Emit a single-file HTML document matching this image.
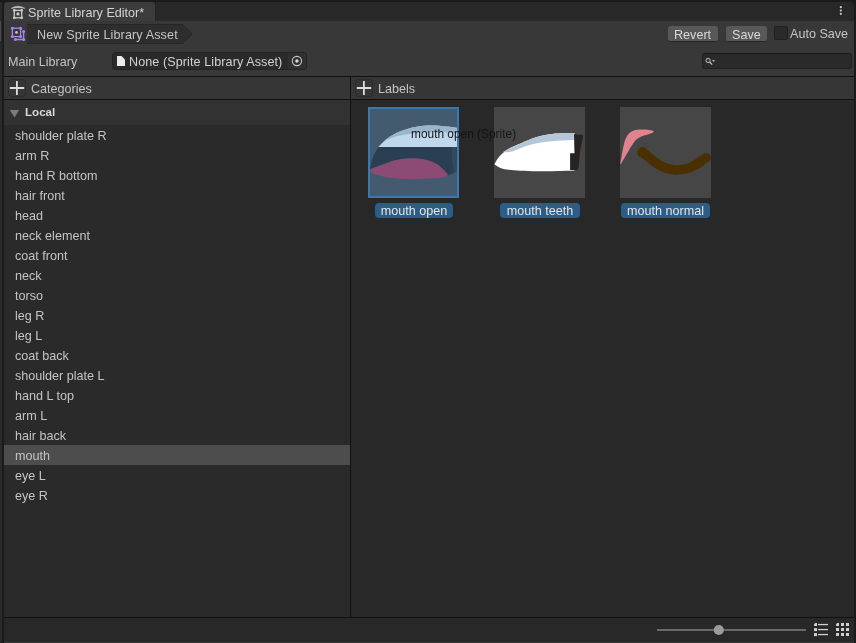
<!DOCTYPE html>
<html><head><meta charset="utf-8">
<style>
*{box-sizing:border-box;margin:0;padding:0}
html,body{width:856px;height:643px;overflow:hidden;background:#1b1b1b}
body{font-family:"Liberation Sans",sans-serif;font-size:12.6px;color:#c4c4c4;position:relative;-webkit-font-smoothing:antialiased}
.a{position:absolute}
.t{position:absolute;white-space:nowrap;line-height:16px;will-change:transform}
.line{position:absolute;background:#111111}
.row{position:absolute;left:4px;width:346px;height:20px}
.row span{position:absolute;left:11px;top:1px;line-height:20px;white-space:nowrap;will-change:transform}
.pill{position:absolute;top:203px;height:15px;background:#2c5d87;border-radius:4px;color:#e4e4e4;line-height:17px;text-align:center;white-space:nowrap;will-change:transform}
.thumb{position:absolute;top:107px;width:91px;height:91px;background:#464646;overflow:hidden}
.thumb svg{filter:blur(0.5px)}
</style></head><body>
<!-- window -->
<div class="a" style="left:0;top:2px;width:2px;height:640px;background:#2a2a2a"></div>
<div class="a" style="left:0;top:21px;width:1px;height:20px;background:#4a4a4a"></div>
<div class="a" style="left:4px;top:2px;width:850px;height:641px;background:#383838;border-radius:5px 5px 0 0"></div>
<div class="a" style="left:4px;top:2px;width:850px;height:19px;background:#282828;border-radius:5px 5px 0 0"></div>
<div class="a" style="left:155px;top:2px;width:1px;height:19px;background:#232323"></div>
<div class="a" style="left:4px;top:2px;width:151px;height:19px;background:#3c3c3c;border-radius:4px 3px 0 0"></div>
<svg class="a" style="left:0;top:0" width="30" height="46" viewBox="0 0 30 46">
  <g fill="none" stroke="#c9c9c9" stroke-width="1.3">
    <rect x="14.3" y="10.4" width="7.4" height="7.4"/>
  </g>
  <g fill="#c9c9c9"><circle cx="14.3" cy="10.4" r="1.35"/><circle cx="21.7" cy="10.4" r="1.35"/><circle cx="14.3" cy="17.8" r="1.35"/><circle cx="21.7" cy="17.8" r="1.35"/><circle cx="18" cy="13.9" r="1.6"/><path d="M11 8.4Q18 3.9 25 8.4Q18 6.9 11 8.4Z" stroke="#c9c9c9" stroke-width="0.4"/></g>
  <g fill="none" stroke="#a783f1" stroke-width="1.3">
    <rect x="12.4" y="28.2" width="8.2" height="8.4"/>
    <path d="M23.6 31.4V39.5H15.4"/>
  </g>
  <g fill="#a783f1"><circle cx="12.4" cy="28.2" r="1.5"/><circle cx="20.6" cy="28.2" r="1.5"/><circle cx="12.4" cy="36.6" r="1.5"/><circle cx="20.6" cy="36.6" r="1.5"/><circle cx="23.6" cy="31.4" r="1.5"/><circle cx="23.6" cy="39.5" r="1.5"/><circle cx="15.4" cy="39.5" r="1.5"/></g>
  <circle cx="16.5" cy="32.4" r="1.4" fill="#c4c4c4"/>
</svg>
<div class="t" style="left:28px;top:5px;color:#d2d2d2">Sprite Library Editor*</div>
<!-- kebab -->
<svg class="a" style="left:836px;top:4px" width="10" height="14"><g fill="#d0d0d0"><circle cx="4.8" cy="3.2" r="1.1"/><circle cx="4.8" cy="6.5" r="1.1"/><circle cx="4.8" cy="9.8" r="1.1"/></g></svg>

<!-- breadcrumb -->
<svg class="a" style="left:27px;top:24px" width="170" height="20"><path d="M-1 0.5H155.8L165.2 10L155.8 19.5H-1Z" fill="#2e2e2e" stroke="#262626" stroke-width="1"/></svg>
<div class="t" style="left:37px;top:27px;color:#c4c4c4;letter-spacing:0.12px">New Sprite Library Asset</div>

<!-- toolbar buttons -->
<div class="a" style="left:668px;top:26px;width:50px;height:16px;background:#585858;border-radius:3px;border-bottom:1px solid #262626"></div>
<div class="t" style="left:674px;top:27px;color:#d8d8d8">Revert</div>
<div class="a" style="left:726px;top:26px;width:41px;height:16px;background:#585858;border-radius:3px;border-bottom:1px solid #262626"></div>
<div class="t" style="left:732px;top:27px;color:#d8d8d8">Save</div>
<div class="a" style="left:774px;top:26px;width:14px;height:14px;background:#2a2a2a;border:1px solid #202020;border-radius:2px"></div>
<div class="t" style="left:790px;top:26px;color:#c4c4c4">Auto Save</div>

<!-- main library row -->
<div class="t" style="left:8px;top:54px">Main Library</div>
<div class="a" style="left:112px;top:52px;width:195px;height:18px;background:#2a2a2a;border:1px solid #232323;border-radius:3px"></div>
<div class="a" style="left:288px;top:53px;width:18px;height:16px;background:#303030"></div>
<svg class="a" style="left:112px;top:50px" width="200" height="24">
  <path d="M5 6H9.5L13 9.5V16H5Z" fill="#ececec"/>
  <circle cx="184.9" cy="11" r="4.6" fill="none" stroke="#c8c8c8" stroke-width="1.1"/>
  <circle cx="184.9" cy="11" r="1.7" fill="#dcdcdc"/>
</svg>
<div class="t" style="left:129px;top:54px;color:#d2d2d2;letter-spacing:0.08px">None (Sprite Library Asset)</div>
<div class="a" style="left:702px;top:53px;width:150px;height:16px;background:#2a2a2a;border:1px solid #212121;border-top-color:#1a1a1a;border-radius:3px"></div>
<svg class="a" style="left:702px;top:53px" width="20" height="16">
  <circle cx="6.1" cy="7.5" r="2.1" fill="none" stroke="#c8c8c8" stroke-width="1"/>
  <path d="M7.6 9L10.3 11.6" stroke="#c8c8c8" stroke-width="1.2"/>
  <path d="M10 7.3H13.2L11.6 9Z" fill="#c8c8c8"/>
</svg>

<!-- split panels -->
<div class="a" style="left:4px;top:77px;width:346px;height:540px;background:#2a2a2a"></div>
<div class="a" style="left:351px;top:77px;width:503px;height:540px;background:#282828"></div>
<div class="a" style="left:4px;top:77px;width:346px;height:22px;background:#363636"></div>
<div class="a" style="left:351px;top:77px;width:503px;height:22px;background:#363636"></div>
<div class="line" style="left:4px;top:76px;width:850px;height:1px"></div>
<div class="line" style="left:350px;top:77px;width:1px;height:541px"></div>
<div class="line" style="left:4px;top:99px;width:850px;height:1px"></div>
<!-- plus buttons -->
<div class="a" style="left:8px;top:79px;width:18px;height:18px;background:#363636;border:1px solid #2b2b2b;border-radius:4px"></div>
<div class="a" style="left:355px;top:79px;width:18px;height:18px;background:#363636;border:1px solid #2b2b2b;border-radius:4px"></div>
<svg class="a" style="left:0;top:76px" width="380" height="24">
  <path d="M9.8 12H24.2M16.9 4.9V19" stroke="#dedede" stroke-width="1.8"/>
  <path d="M356.8 12H371.2M363.9 4.9V19" stroke="#dedede" stroke-width="1.8"/>
</svg>
<div class="t" style="left:31px;top:81px">Categories</div>
<div class="t" style="left:378px;top:81px">Labels</div>

<!-- local header -->
<div class="a" style="left:4px;top:100px;width:346px;height:25px;background:#323232"></div>
<svg class="a" style="left:8px;top:108px" width="14" height="12"><path d="M1.8 2H11.2L6.5 9.6Z" fill="#7c7c7c"/></svg>
<div class="t" style="left:25px;top:104px;font-weight:bold;font-size:11.6px;color:#d8d8d8">Local</div>

<div class="a" style="left:0;top:125px">
  <div class="row" style="top:0"><span>shoulder plate R</span></div>
  <div class="row" style="top:20px"><span>arm R</span></div>
  <div class="row" style="top:40px"><span>hand R bottom</span></div>
  <div class="row" style="top:60px"><span>hair front</span></div>
  <div class="row" style="top:80px"><span>head</span></div>
  <div class="row" style="top:100px"><span>neck element</span></div>
  <div class="row" style="top:120px"><span>coat front</span></div>
  <div class="row" style="top:140px"><span>neck</span></div>
  <div class="row" style="top:160px"><span>torso</span></div>
  <div class="row" style="top:180px"><span>leg R</span></div>
  <div class="row" style="top:200px"><span>leg L</span></div>
  <div class="row" style="top:220px"><span>coat back</span></div>
  <div class="row" style="top:240px"><span>shoulder plate L</span></div>
  <div class="row" style="top:260px"><span>hand L top</span></div>
  <div class="row" style="top:280px"><span>arm L</span></div>
  <div class="row" style="top:300px"><span>hair back</span></div>
  <div class="row" style="top:320px;background:#4d4d4d"><span>mouth</span></div>
  <div class="row" style="top:340px"><span>eye L</span></div>
  <div class="row" style="top:360px"><span>eye R</span></div>
</div>

<!-- thumbnails -->
<div class="thumb" style="left:368px;background:#445a6f">
  <svg width="91" height="91" viewBox="368 107 91 91">
    <path d="M378.8 147.1C375 152 372 158 371 164.2C370.5 167 370.2 168.5 370.2 169.7L379.6 165.8L395.1 160.3L410.7 158.3L426.2 159.9L437.1 164.2L444.9 171.2L447.2 175.9L454.2 172.8L457.3 170.4L459 166V147Z" fill="#2a3f52"/>
    <path d="M452 147H456.5L457.3 170.4L454.2 172.8L452 160Z" fill="#33495d"/>
    <path d="M378.3 147.1C379.8 145.7 383.7 141.1 387.3 138.5C390.9 135.9 395.1 133.4 399.8 131.5C404.5 129.6 410.1 127.9 415.3 126.9C420.5 125.9 425.7 125.6 430.9 125.6C436.1 125.5 441.5 126.1 446.4 126.6C451.2 127.0 457.7 128.0 460.0 128.3V147.1Z" fill="#bfd8ec"/>
    <path d="M378.3 147.1C379.8 145.7 383.7 141.1 387.3 138.5C390.9 135.9 395.1 133.4 399.8 131.5C404.5 129.6 410.1 127.9 415.3 126.9C420.5 125.9 425.7 125.6 430.9 125.6C436.1 125.5 441.5 126.1 446.4 126.6C451.2 127.0 457.7 128.0 460.0 128.3V133.5C445 131.8 430 131.8 418 133C405 134.2 395 136 384 141Z" fill="#9bb5cc"/>
    <path d="M370.2 169.7C371.2 168.4 375.5 167.4 379.6 165.8C383.8 164.2 389.9 161.6 395.1 160.3C400.3 159.1 405.5 158.4 410.7 158.3C415.9 158.2 421.8 158.9 426.2 159.9C430.6 160.9 434.0 162.3 437.1 164.2C440.2 166.1 443.2 169.2 444.9 171.2C446.6 173.1 449.0 174.7 447.2 175.9C445.4 177.1 440.1 177.7 434.0 178.2C427.9 178.7 418.5 179.1 410.7 179.0C402.9 178.9 393.5 178.3 387.3 177.4C381.1 176.5 376.2 174.8 373.3 173.5C370.4 172.2 369.1 171.0 370.2 169.7Z" fill="#8b4b75"/>
  </svg>
  <div class="a" style="left:0;top:0;width:91px;height:91px;border:2px solid #3b77ab"></div>
</div>
<div class="thumb" style="left:494px">
  <svg width="91" height="91" viewBox="494 107 91 91">
    <path d="M494.4 164.2C495.2 162.9 496.9 159.0 499.3 156.4C501.7 153.8 505.1 150.9 508.7 148.7C512.3 146.5 516.4 145.1 521.1 143.2C525.8 141.2 531.5 138.6 536.7 137.0C541.9 135.4 545.9 134.6 552.2 133.9C558.5 133.2 570.8 133.2 574.5 133.1V170.4C560 171 545 171.4 536.7 171.2C525 171 515 170.5 508.7 169.7C503 169 499 168 494.4 164.2Z" fill="#ffffff"/>
    <path d="M503.0 152.0C503.9 151.4 505.7 150.2 508.7 148.7C511.7 147.2 516.4 145.1 521.1 143.2C525.8 141.2 531.5 138.6 536.7 137.0C541.9 135.4 545.9 134.6 552.2 133.9C558.5 133.2 570.8 133.2 574.5 133.1V140.1C565 140.5 558 140.8 552.2 141.2C547 141.6 542 142.2 536.7 143.2C531 144.3 526 145.8 521.1 147.9C515 150.5 510 153 503 152Z" fill="#b5c6d8"/>
    <path d="M574 134.2L583.3 135.2L580 152L578.6 167.3L577 170H570.1V153.3H574.8Z" fill="#262321"/>
  </svg>
</div>
<div class="thumb" style="left:620px">
  <svg width="91" height="91" viewBox="620 107 91 91">
    <path d="M620.4 164.4C620.2 163.4 621.4 157.3 622.1 153.4C622.8 149.5 623.8 144.3 624.8 141.1C625.8 137.9 626.8 136.1 628.3 134.3C629.8 132.5 631.4 131.3 633.7 130.5C636.0 129.7 639.0 129.6 641.9 129.5C644.8 129.4 648.8 129.8 650.8 130.2C652.8 130.5 653.6 131.1 653.8 131.6C654.0 132.1 653.8 132.2 652.2 132.9C650.6 133.6 646.6 134.5 644.0 135.6C641.4 136.7 638.3 138.0 636.5 139.4C634.7 140.8 634.4 141.8 633.0 143.8C631.6 145.8 629.9 148.8 628.3 151.4C626.7 154.0 624.8 157.4 623.5 159.6C622.2 161.8 620.6 165.4 620.4 164.4Z" fill="#e0838f"/>
    <path d="M642.8 152.6Q649 157.5 654.5 161.8Q659 165.5 664.3 167.5Q670 169.8 676.1 169.9Q683 170 688.9 168Q694 166 698.7 163.1Q702 160.5 706.1 157.7" fill="none" stroke="#4a3000" stroke-width="9.5" stroke-linecap="round"/>
    <circle cx="642.7" cy="152.4" r="5.3" fill="#4a3000"/>
  </svg>
</div>
<div class="pill" style="left:375px;width:78px">mouth open</div>
<div class="pill" style="left:500px;width:80px">mouth teeth</div>
<div class="pill" style="left:621px;width:89px">mouth normal</div>
<div class="t" style="left:411px;top:126px;color:#141414;font-size:11.9px">mouth open (Sprite)</div>

<!-- footer -->
<div class="line" style="left:4px;top:617px;width:850px;height:1px"></div>
<div class="a" style="left:4px;top:618px;width:850px;height:24px;background:#282828"></div>
<svg class="a" style="left:640px;top:615px" width="216" height="28">
  <path d="M17 15H166" stroke="#6a6a6a" stroke-width="2.2"/>
  <circle cx="78.8" cy="15" r="5.1" fill="#9c9c9c"/>
  <g fill="#d0d0d0">
    <path d="M175.2 8.1H177V11.1H174V9.3Z"/><rect x="174" y="13.1" width="3" height="3"/><rect x="174" y="18.1" width="3" height="3"/>
    <rect x="178" y="8.9" width="10" height="1.3"/><rect x="178" y="13.9" width="10" height="1.3"/><rect x="178" y="18.9" width="10" height="1.3"/>
    <path d="M197.2 8H199V11H196V9.2Z"/><rect x="201" y="8" width="3" height="3"/><rect x="206" y="8" width="3" height="3"/>
    <rect x="196" y="13" width="3" height="3"/><rect x="201" y="13" width="3" height="3"/><rect x="206" y="13" width="3" height="3"/>
    <rect x="196" y="18" width="3" height="3"/><rect x="201" y="18" width="3" height="3"/><rect x="206" y="18" width="3" height="3"/>
  </g>
</svg>
</body></html>
